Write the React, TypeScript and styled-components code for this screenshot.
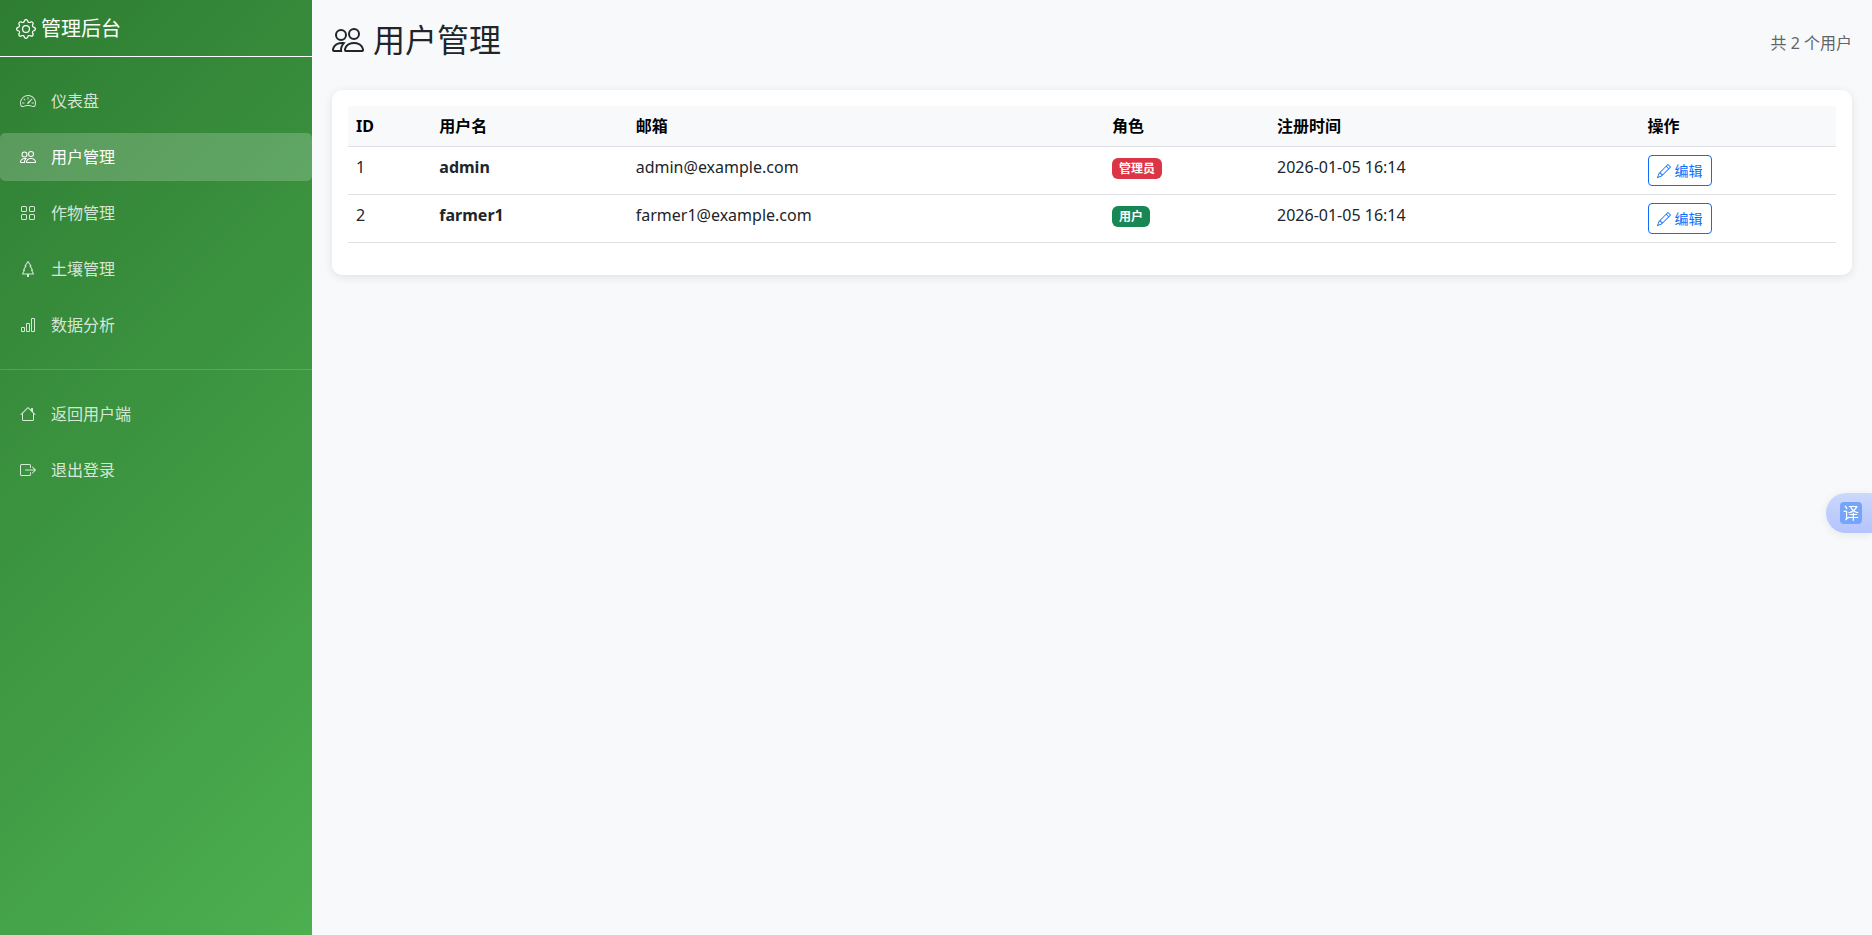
import React from 'react';
import styled, { createGlobalStyle, css } from 'styled-components';
import {
  BsBarChart,
  BsBoxArrowRight,
  BsGear,
  BsGrid,
  BsHouse,
  BsPencil,
  BsPeople,
  BsSpeedometer2,
  BsTree,
} from 'react-icons/bs';

const GlobalStyle = createGlobalStyle`
  *, *::before, *::after { box-sizing: border-box; }
  body {
    margin: 0;
    background: #f8f9fa;
    color: #212529;
    font-family: "Noto Sans", "Noto Sans CJK SC", sans-serif;
    font-size: 16px;
    line-height: 24px;
  }
`;

const Layout = styled.div`
  display: grid;
  grid-template-columns: 1fr 5fr;
  min-height: 100vh;
`;

const Sidebar = styled.aside`
  background: linear-gradient(135deg, #2e7d32 0%, #4caf50 100%);
  color: #fff;
`;

const Brand = styled.h2`
  display: flex;
  align-items: center;
  gap: 5px;
  margin: 0;
  padding: 17px 16px 15px;
  border-bottom: 1px solid #fff;
  font-size: 20px;
  font-weight: 400;
  line-height: 24px;
`;

const Nav = styled.nav`
  display: flex;
  flex-direction: column;
  padding: 16px 0;
`;

const NavLink = styled.a<{ $active?: boolean }>`
  display: flex;
  align-items: center;
  gap: 15px;
  margin: 4px 0;
  padding: 12px 20px;
  border-radius: 5px;
  color: rgba(255, 255, 255, 0.8);
  text-decoration: none;
  ${({ $active }) =>
    $active &&
    css`
      background: rgba(255, 255, 255, 0.2);
      color: #fff;
    `}
`;

const NavDivider = styled.hr`
  width: 100%;
  margin: 16px 0;
  border: 0;
  border-top: 1px solid rgba(255, 255, 255, 0.16);
`;

const Main = styled.main`
  padding: 20px;
`;

const PageHeader = styled.header`
  display: flex;
  justify-content: space-between;
  align-items: center;
  margin-bottom: 24px;
`;

const PageTitle = styled.h1`
  display: flex;
  align-items: center;
  gap: 9px;
  margin: 0 0 6px;
  font-size: 32px;
  font-weight: 400;
  line-height: 40px;
`;

const UserCount = styled.span`
  color: #5f656a;
`;

const Card = styled.section`
  padding: 16px 16px 32px;
  border-radius: 10px;
  background: #fff;
  box-shadow: 0 2px 10px rgba(0, 0, 0, 0.1);
`;

const UserTable = styled.table`
  width: 100%;
  border-collapse: collapse;
  table-layout: fixed;
`;

const Column = styled.col<{ $share: number }>`
  width: ${({ $share }) => $share}%;
`;

const HeadCell = styled.th`
  padding: 8px;
  border-bottom: 1px solid #dee2e6;
  background: #f8f9fa;
  color: #000;
  font-weight: 700;
  text-align: left;
`;

const Cell = styled.td`
  padding: 8px;
  border-bottom: 1px solid #dee2e6;
  vertical-align: top;
`;

const Badge = styled.span<{ $tone: 'danger' | 'success' }>`
  display: inline-block;
  padding: 4px 7px;
  border-radius: 6px;
  background: ${({ $tone }) => ($tone === 'danger' ? '#dc3545' : '#198754')};
  color: #fff;
  font-size: 12px;
  font-weight: 700;
  line-height: 13px;
`;

const EditButton = styled.button`
  display: flex;
  align-items: center;
  gap: 4px;
  padding: 4px 8px;
  border: 1px solid #0d6efd;
  border-radius: 4px;
  background: transparent;
  color: #0d6efd;
  font: inherit;
  font-size: 14px;
  line-height: 21px;
  cursor: pointer;
`;

const TranslateTab = styled.button`
  position: fixed;
  top: 493px;
  right: 0;
  display: flex;
  align-items: center;
  width: 46px;
  height: 40px;
  padding: 0 0 0 14px;
  border: 0;
  border-radius: 20px 0 0 20px;
  background: linear-gradient(180deg, #cbd8fe, #b4c3fc);
  box-shadow: 0 2px 10px rgba(0, 0, 0, 0.08);
  cursor: pointer;
`;

const TranslateGlyph = styled.span`
  width: 22px;
  padding-bottom: 2px;
  border-radius: 4px;
  background: #76a5f8;
  color: #fff;
  font-family: "Noto Sans CJK SC", sans-serif;
  font-size: 16px;
  line-height: 20px;
  text-align: center;
`;

const adminLinks = [
  { label: '仪表盘', icon: BsSpeedometer2 },
  { label: '用户管理', icon: BsPeople, active: true },
  { label: '作物管理', icon: BsGrid },
  { label: '土壤管理', icon: BsTree },
  { label: '数据分析', icon: BsBarChart },
];

const accountLinks = [
  { label: '返回用户端', icon: BsHouse },
  { label: '退出登录', icon: BsBoxArrowRight },
];

const columns = [
  { label: 'ID', share: 5.6 },
  { label: '用户名', share: 13.2 },
  { label: '邮箱', share: 32 },
  { label: '角色', share: 11.1 },
  { label: '注册时间', share: 24.9 },
  { label: '操作', share: 13.2 },
];

const users = [
  { id: 1, name: 'admin', email: 'admin@example.com', isAdmin: true, created: '2026-01-05 16:14' },
  { id: 2, name: 'farmer1', email: 'farmer1@example.com', isAdmin: false, created: '2026-01-05 16:14' },
];

export default function App() {
  return (
    <>
      <GlobalStyle />
      <Layout>
        <Sidebar>
          <Brand>
            <BsGear /> 管理后台
          </Brand>
          <Nav>
            {adminLinks.map(({ label, icon: Icon, active }) => (
              <NavLink key={label} href="#" $active={active}>
                <Icon />
                {label}
              </NavLink>
            ))}
            <NavDivider />
            {accountLinks.map(({ label, icon: Icon }) => (
              <NavLink key={label} href="#">
                <Icon />
                {label}
              </NavLink>
            ))}
          </Nav>
        </Sidebar>
        <Main>
          <PageHeader>
            <PageTitle>
              <BsPeople />
              用户管理
            </PageTitle>
            <UserCount>共 {users.length} 个用户</UserCount>
          </PageHeader>
          <Card>
            <UserTable>
              <colgroup>
                {columns.map(({ label, share }) => (
                  <Column key={label} $share={share} />
                ))}
              </colgroup>
              <thead>
                <tr>
                  {columns.map(({ label }) => (
                    <HeadCell key={label} scope="col">{label}</HeadCell>
                  ))}
                </tr>
              </thead>
              <tbody>
                {users.map((user) => (
                  <tr key={user.id}>
                    <Cell>{user.id}</Cell>
                    <Cell><strong>{user.name}</strong></Cell>
                    <Cell>{user.email}</Cell>
                    <Cell>
                      <Badge $tone={user.isAdmin ? 'danger' : 'success'}>
                        {user.isAdmin ? '管理员' : '用户'}
                      </Badge>
                    </Cell>
                    <Cell>{user.created}</Cell>
                    <Cell>
                      <EditButton type="button">
                        <BsPencil />
                        编辑
                      </EditButton>
                    </Cell>
                  </tr>
                ))}
              </tbody>
            </UserTable>
          </Card>
        </Main>
      </Layout>
      <TranslateTab type="button" aria-label="翻译">
        <TranslateGlyph>译</TranslateGlyph>
      </TranslateTab>
    </>
  );
}
